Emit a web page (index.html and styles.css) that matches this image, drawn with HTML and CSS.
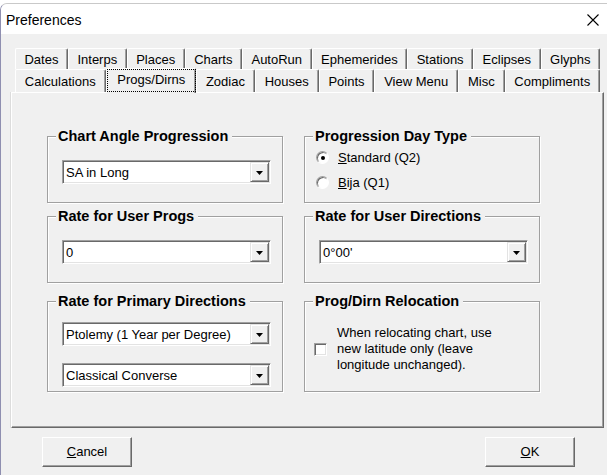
FILE: index.html
```html
<!DOCTYPE html>
<html lang="en">
<head>
    <meta charset="UTF-8">
    <title>Preferences</title>
    <link rel="stylesheet" href="styles.css">
</head>
<body>
    <div class="window">
        <!-- Заголовок окна -->
        <div class="titlebar">
            <span class="title">Preferences</span>
            <svg class="close" width="12" height="12" viewBox="0 0 12 12">
                <path d="M0.5 0.5 L11.5 11.5 M11.5 0.5 L0.5 11.5" stroke="#000" stroke-width="1.1" fill="none"/>
            </svg>
        </div>

        <div class="content">
            <!-- Вкладки -->
            <div class="tabs">
                <div class="tab-row row-back">
                    <div class="tab">Dates</div>
                    <div class="tab">Interps</div>
                    <div class="tab">Places</div>
                    <div class="tab">Charts</div>
                    <div class="tab">AutoRun</div>
                    <div class="tab">Ephemerides</div>
                    <div class="tab">Stations</div>
                    <div class="tab">Eclipses</div>
                    <div class="tab">Glyphs</div>
                </div>
                <div class="tab-row row-front">
                    <div class="tab">Calculations</div>
                    <div class="tab active"><span class="focus">Progs/Dirns</span></div>
                    <div class="tab">Zodiac</div>
                    <div class="tab">Houses</div>
                    <div class="tab">Points</div>
                    <div class="tab">View Menu</div>
                    <div class="tab">Misc</div>
                    <div class="tab">Compliments</div>
                </div>
            </div>

            <!-- Страница вкладки -->
            <div class="panel">
                <div class="groups">
                    <fieldset class="group short">
                        <legend>Chart Angle Progression</legend>
                        <div class="combo first">
                            <span class="combo-text">SA in Long</span>
                            <span class="combo-btn"><svg width="7" height="4" viewBox="0 0 7 4"><polygon points="0,0 7,0 3.5,4" fill="#000"/></svg></span>
                        </div>
                    </fieldset>

                    <fieldset class="group short">
                        <legend>Progression Day Type</legend>
                        <div class="radios">
                            <div class="radio-row">
                                <span class="radio checked"></span>
                                <span><u>S</u>tandard (Q2)</span>
                            </div>
                            <div class="radio-row">
                                <span class="radio"></span>
                                <span><u>B</u>ija (Q1)</span>
                            </div>
                        </div>
                    </fieldset>

                    <fieldset class="group short">
                        <legend>Rate for User Progs</legend>
                        <div class="combo first">
                            <span class="combo-text">0</span>
                            <span class="combo-btn"><svg width="7" height="4" viewBox="0 0 7 4"><polygon points="0,0 7,0 3.5,4" fill="#000"/></svg></span>
                        </div>
                    </fieldset>

                    <fieldset class="group short">
                        <legend>Rate for User Directions</legend>
                        <div class="combo first">
                            <span class="combo-text">0°00'</span>
                            <span class="combo-btn"><svg width="7" height="4" viewBox="0 0 7 4"><polygon points="0,0 7,0 3.5,4" fill="#000"/></svg></span>
                        </div>
                    </fieldset>

                    <fieldset class="group tall">
                        <legend>Rate for Primary Directions</legend>
                        <div class="combo upper">
                            <span class="combo-text">Ptolemy (1 Year per Degree)</span>
                            <span class="combo-btn"><svg width="7" height="4" viewBox="0 0 7 4"><polygon points="0,0 7,0 3.5,4" fill="#000"/></svg></span>
                        </div>
                        <div class="combo lower">
                            <span class="combo-text">Classical Converse</span>
                            <span class="combo-btn"><svg width="7" height="4" viewBox="0 0 7 4"><polygon points="0,0 7,0 3.5,4" fill="#000"/></svg></span>
                        </div>
                    </fieldset>

                    <fieldset class="group tall">
                        <legend>Prog/Dirn Relocation</legend>
                        <div class="check-row">
                            <span class="checkbox"></span>
                            <span class="check-text">When relocating chart, use new latitude only (leave longitude unchanged).</span>
                        </div>
                    </fieldset>
                </div>
            </div>

            <!-- Кнопки -->
            <div class="buttons">
                <div class="btn"><u>C</u>ancel</div>
                <div class="btn"><u>O</u>K</div>
            </div>
        </div>
    </div>
</body>
</html>
```

FILE: styles.css
```css
body {
    margin: 0;
    overflow: hidden;
    background: #ffffff;
    font-family: 'Liberation Sans', Arial, sans-serif;
    font-size: 13px;
    color: #000000;
}

.window {
    margin-top: 3px;
    width: 620px;
    height: 480px;
    border-left: 1px solid #8f8fb0;
    border-top: 1px solid #c9c9c9;
    border-radius: 7px 0 0 0;
    background: #f0f0f0;
    overflow: hidden;
}

.titlebar {
    height: 30px;
    background: #ffffff;
    display: flex;
    align-items: center;
    padding: 0 0 0 5px;
    width: 606px;
    box-sizing: border-box;
}

.title {
    font-size: 14px;
    flex: 1;
    padding-top: 1px;
}

.close {
    margin-right: 8px;
    margin-top: 1px;
}

.content {
    padding-top: 14px;
    width: 606px;
}

/* вкладки */
.tabs {
    margin-left: 14px;
    width: 585px;
    position: relative;
    z-index: 2;
}

.tab-row {
    display: flex;
}

.row-back {
    height: 21px;
}

.row-front {
    height: 23px;
    align-items: flex-end;
}

.tab {
    flex: 1 1 auto;
    box-sizing: border-box;
    padding: 2px 8px 0;
    text-align: center;
    white-space: nowrap;
    border-top: 1px solid #ffffff;
    border-left: 1px solid #ffffff;
    border-right: 1px solid #696969;
    box-shadow: inset -1px 0 #a0a0a0;
    border-radius: 2px 2px 0 0;
    background: #f0f0f0;
}

.row-back .tab {
    height: 21px;
    line-height: 18px;
}

.row-front .tab {
    height: 23px;
    line-height: 20px;
}

.row-front .tab.active {
    height: 25px;
    margin-bottom: -1px;
    padding: 0;
    line-height: 21px;
    position: relative;
}

.focus {
    display: block;
    height: 23px;
    box-sizing: border-box;
    border: 1px dotted #000;
    margin: 0 -1px 0 0;
    padding: 0 9px;
    line-height: 20px;
}

/* страница */
.panel {
    margin-left: 10px;
    width: 593px;
    height: 336px;
    box-sizing: border-box;
    border-top: 1px solid #ffffff;
    border-left: 1px solid #ffffff;
    border-right: 1px solid #696969;
    border-bottom: 1px solid #696969;
    box-shadow: inset -1px -1px #a0a0a0, -1px 0 #dcdcdc;
    padding: 35px 0 0 35px;
    position: relative;
    z-index: 1;
}

.groups {
    display: grid;
    grid-template-columns: 236px 236px;
    grid-template-rows: 75px 75px 104px;
    column-gap: 21px;
    row-gap: 5px;
}

.group {
    margin: 0;
    padding: 0;
    min-width: 0;
    box-sizing: border-box;
    border: 1px solid #a0a0a0;
    box-shadow: inset 1px 1px #ffffff, 1px 1px #ffffff;
}

.group.tall {
    margin-top: 5px;
}

legend {
    font-weight: bold;
    font-size: 14.5px;
    line-height: 17px;
    margin-left: 8px;
    padding: 0 4px 0 2px;
    background: #f0f0f0;
}

/* выпадающий список */
.combo {
    display: flex;
    height: 24px;
    box-sizing: border-box;
    margin: 0 11px 0 14px;
    padding: 1px;
    background: #ffffff;
    border: 1px solid;
    border-color: #a0a0a0 #ffffff #ffffff #a0a0a0;
    box-shadow: inset 1px 1px #696969, inset -1px -1px #e3e3e3;
}

.combo.first {
    margin-top: 15px;
}

.combo.upper {
    margin-top: 12px;
}

.combo.lower {
    margin-top: 17px;
}

.combo-text {
    flex: 1;
    padding-left: 2px;
    line-height: 21px;
    white-space: nowrap;
}

.combo-btn {
    width: 19px;
    height: 20px;
    box-sizing: border-box;
    display: flex;
    align-items: center;
    justify-content: center;
    background: #f0f0f0;
    border: 1px solid;
    border-color: #e3e3e3 #696969 #696969 #e3e3e3;
    box-shadow: inset 1px 1px #ffffff, inset -1px -1px #a0a0a0;
    padding-top: 1px;
}

/* переключатели */
.radios {
    padding-left: 11px;
}

.radio-row {
    height: 25px;
    display: flex;
    align-items: center;
    gap: 9px;
}

.radio {
    width: 13px;
    height: 13px;
    box-sizing: border-box;
    border-radius: 50%;
    background: #ffffff;
    border: 1px solid;
    border-color: #a0a0a0 #ffffff #ffffff #a0a0a0;
    box-shadow: inset 1px 1px #696969;
    position: relative;
}

.radio.checked::after {
    content: '';
    position: absolute;
    left: 4px;
    top: 4px;
    width: 4px;
    height: 4px;
    border-radius: 50%;
    background: #000000;
}

/* флажок */
.check-row {
    display: flex;
    align-items: center;
    gap: 10px;
    margin-top: 15px;
    padding-left: 9px;
}

.checkbox {
    width: 13px;
    height: 13px;
    flex: 0 0 13px;
    box-sizing: border-box;
    background: #ffffff;
    border: 1px solid;
    border-color: #a0a0a0 #ffffff #ffffff #a0a0a0;
    box-shadow: inset 1px 1px #696969, inset -1px -1px #e3e3e3;
}

.check-text {
    width: 170px;
    line-height: 16px;
}

/* кнопки */
.buttons {
    display: flex;
    justify-content: space-between;
    margin-top: 9px;
    padding: 0 32px 0 41px;
}

.btn {
    width: 90px;
    height: 30px;
    box-sizing: border-box;
    line-height: 27px;
    text-align: center;
    background: #f0f0f0;
    border: 1px solid;
    border-color: #ffffff #696969 #696969 #ffffff;
    box-shadow: inset -1px -1px #a0a0a0;
}
```
